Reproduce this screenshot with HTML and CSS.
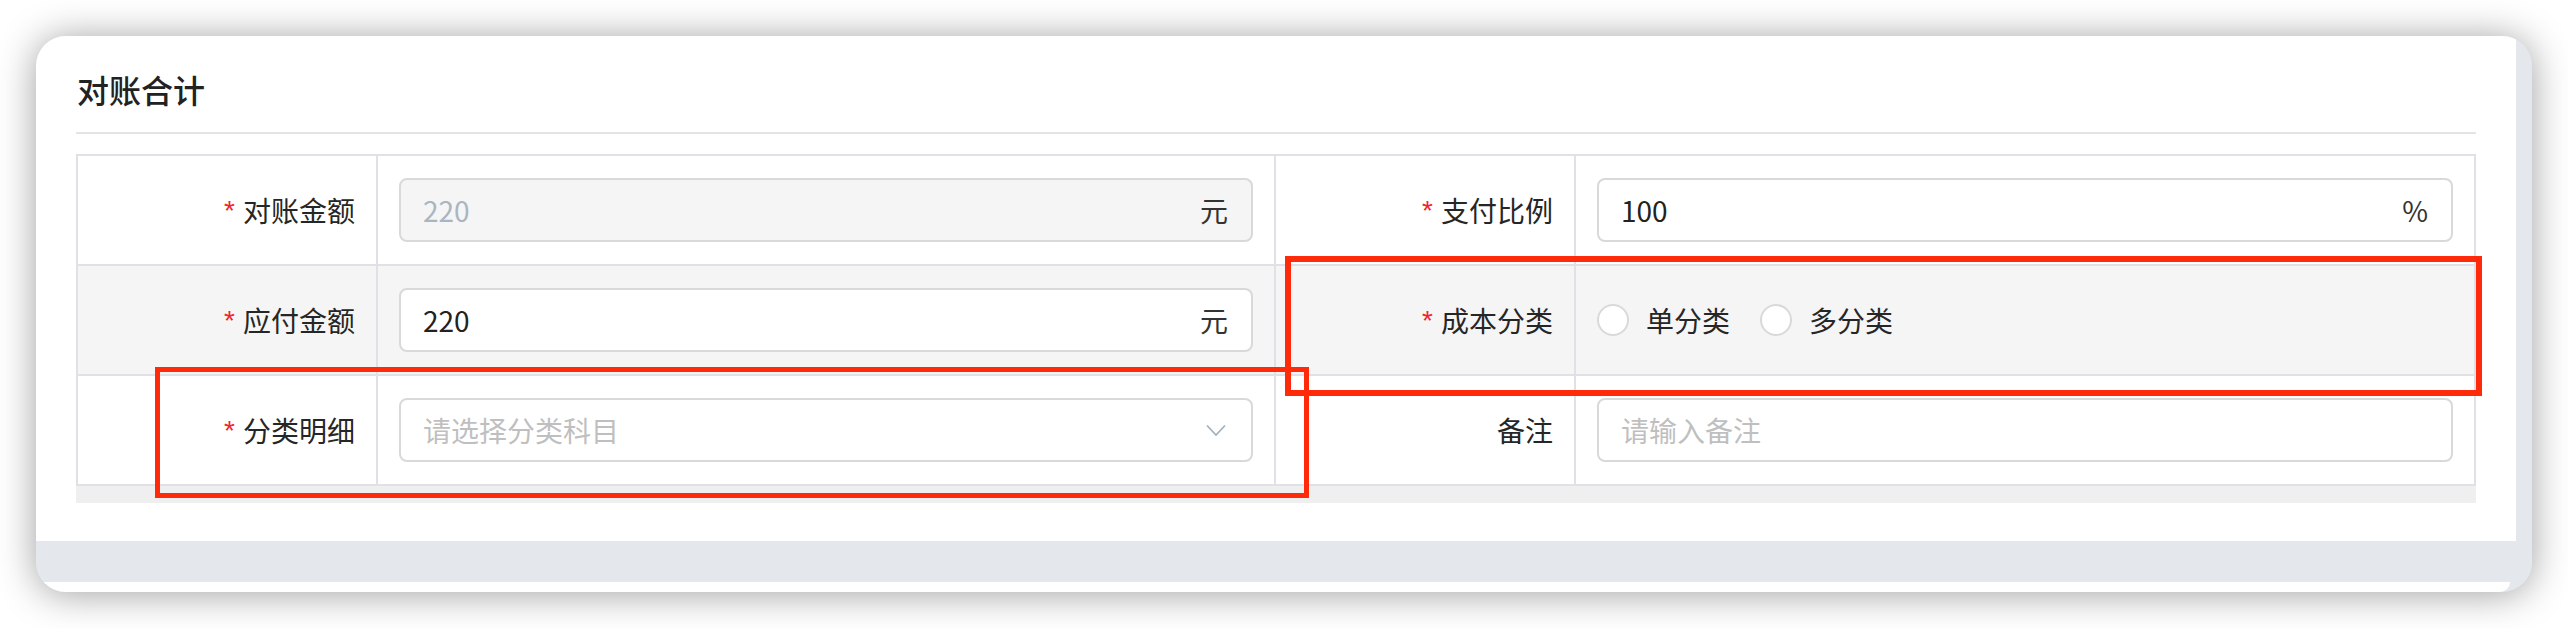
FILE: index.html
```html
<!DOCTYPE html>
<html lang="zh-CN">
<head>
<meta charset="utf-8">
<title>对账合计</title>
<link rel="stylesheet" href="styles.css">
</head>
<body>
<div class="window">
  <div class="main">
    <section class="card">
      <div class="card-head"><h2 class="title">对账合计</h2></div>
      <div class="form-table">
        <div class="cell label"><span class="req">*</span>对账金额</div>
        <div class="cell value">
          <div class="input disabled"><span class="val">220</span><span class="suffix">元</span></div>
        </div>
        <div class="cell label"><span class="req">*</span>支付比例</div>
        <div class="cell value">
          <div class="input"><span class="val">100</span><span class="suffix">%</span></div>
        </div>

        <div class="cell label stripe"><span class="req">*</span>应付金额</div>
        <div class="cell value stripe">
          <div class="input"><span class="val">220</span><span class="suffix">元</span></div>
        </div>
        <div class="cell label stripe"><span class="req">*</span>成本分类</div>
        <div class="cell value stripe">
          <div class="radio-group">
            <label class="radio"><span class="radio-dot"></span><span class="radio-text">单分类</span></label>
            <label class="radio"><span class="radio-dot"></span><span class="radio-text">多分类</span></label>
          </div>
        </div>

        <div class="cell label"><span class="req">*</span>分类明细</div>
        <div class="cell value">
          <div class="input select"><span class="placeholder">请选择分类科目</span>
            <svg class="chev" width="20" height="13" viewBox="0 0 20 13"><polyline points="1,1.5 10,11 19,1.5" fill="none" stroke="#a3b1bf" stroke-width="1.8"/></svg>
          </div>
        </div>
        <div class="cell label">备注</div>
        <div class="cell value">
          <div class="input"><span class="placeholder">请输入备注</span></div>
        </div>
      </div>
      <div class="table-foot"></div>
    </section>
    <div class="side-track"></div>
  </div>
  <div class="page-gap"></div>
  <div class="window-foot"></div>
</div>
<div class="mark mark-a"></div>
<div class="mark mark-b"></div>
</body>
</html>
```
FILE: styles.css
```css
* { box-sizing: border-box; }
html, body { margin: 0; padding: 0; background: #ffffff; }
body {
  width: 2568px;
  height: 628px;
  overflow: hidden;
  position: relative;
  font-family: "Noto Sans CJK SC", "Noto Sans", sans-serif;
  color: #262626;
}
.window {
  margin: 36px 0 0 36px;
  width: 2496px;
  height: 556px;
  border-radius: 30px;
  background: #e4e7eb;
  box-shadow: 0 2px 38px rgba(0, 0, 0, 0.38);
  overflow: hidden;
  display: flex;
  flex-direction: column;
}
.main { display: flex; height: 505px; }
.card {
  width: 2480px;
  height: 505px;
  background: #ffffff;
  padding: 0 40px;
}
.side-track { flex: 1; background: #e4e7eb; }
.page-gap { height: 41px; background: #e4e7eb; }
.window-foot {
  height: 10px;
  background: #ffffff;
  width: 2474px;
  border-bottom-right-radius: 18px;
}
.card-head {
  height: 98px;
  padding-top: 10px;
  display: flex;
  align-items: center;
  border-bottom: 2px solid #e4e4e4;
}
.title {
  margin: 0;
  font-size: 32px;
  line-height: 32px;
  font-weight: 500;
  color: #222222;
  padding-left: 1px;
}
.form-table {
  margin-top: 20px;
  display: grid;
  grid-template-columns: 300px 898px 300px 900px;
  grid-auto-rows: 110px;
  border-top: 2px solid #e0e0e6;
  border-left: 2px solid #e0e0e6;
}
.cell {
  border-right: 2px solid #e0e0e6;
  border-bottom: 2px solid #e0e0e6;
  display: flex;
  align-items: center;
  background: #ffffff;
}
.cell.stripe { background: #f5f5f5; }
.label {
  justify-content: flex-end;
  padding-right: 21px;
  font-size: 28px;
  color: #262626;
}
.req {
  color: #f5222d;
  font-family: "Liberation Sans", sans-serif;
  font-size: 28px;
  margin-right: 8px;
  position: relative;
  top: 1px;
}
.value { padding: 0 21px; }
.input {
  width: 100%;
  height: 64px;
  border: 2px solid #d9d9d9;
  border-radius: 8px;
  background: #ffffff;
  padding: 0 23px 0 22px;
  display: flex;
  align-items: center;
  justify-content: space-between;
  font-size: 28px;
  color: #222222;
}
.input.disabled { background: #f5f5f5; }
.input.disabled .val { color: #a9b6c2; }
.suffix { color: #333333; }
.placeholder { color: #bfbfbf; }
.chev { margin-right: 2px; }
.radio-group { display: flex; align-items: center; padding-left: 0; }
.radio { display: flex; align-items: center; margin-right: 33px; font-size: 28px; }
.radio + .radio { margin-left: -3px; }
.radio-dot {
  width: 32px;
  height: 32px;
  border-radius: 50%;
  border: 2px solid #d9d9d9;
  background: #ffffff;
  margin-right: 17px;
}
.table-foot {
  height: 17px;
  background: #efefef;
}
.mark {
  position: absolute;
  border: 5px solid #ff2a0a;
}
.mark-a { left: 155px; top: 367px; width: 1154px; height: 131px; }
.mark-b { left: 1285px; top: 256px; width: 1197px; height: 140px; border-width: 6px; }
```
